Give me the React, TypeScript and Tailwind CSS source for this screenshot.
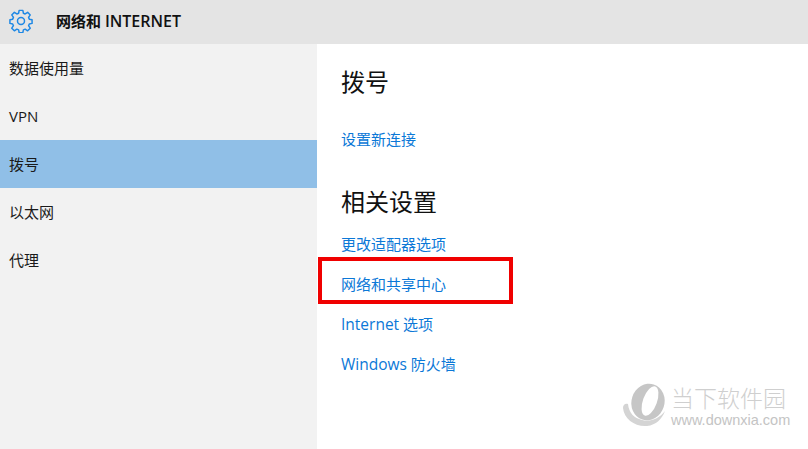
function Gear() {
  return (
    <svg width="24" height="24" viewBox="0 0 26 26" fill="none" stroke="#1e88e5" strokeWidth="1.6" className="shrink-0">
      <path d="M11 1.5h4l.6 3.1 1.9.8 2.7-1.8 2.8 2.8-1.8 2.7.8 1.9 3 .6v4l-3 .6-.8 1.9 1.8 2.7-2.8 2.8-2.7-1.8-1.9.8-.6 3h-4l-.6-3-1.9-.8-2.7 1.8-2.8-2.8 1.8-2.7-.8-1.9-3-.6v-4l3-.6.8-1.9-1.8-2.7 2.8-2.8 2.7 1.8 1.9-.8z" strokeLinejoin="round" />
      <circle cx="13" cy="13" r="3.8" />
    </svg>
  );
}
function Logo() {
  return (
    <svg width="44" height="44" viewBox="0 0 44 44" className="shrink-0">
      <ellipse cx="25" cy="19" rx="16.5" ry="18.5" transform="rotate(18 25 19)" fill="#c6c6c6" />
      <ellipse cx="27" cy="18" rx="7" ry="15.5" transform="rotate(20 27 18)" fill="#ffffff" />
      <path d="M0 25C1 36 12 44 24 43C33 42 39 36 42 28C36 36 27 39 19 37C11 35 6 30 5 21C2 20 0 22 0 25Z" fill="#d4d4d4" />
    </svg>
  );
}
const nav = ["数据使用量", "VPN", "拨号", "以太网", "代理"];
export default function App() {
  return (
    <div className="w-[808px] h-[449px] overflow-hidden relative bg-white flex flex-col font-['Open_Sans','Noto_Sans_CJK_SC',sans-serif] text-[15px]">
      <header className="h-[44px] shrink-0 bg-[#e4e4e4] flex items-center pl-[9px] pb-[3px] gap-[23px]">
        <Gear />
        <span className="text-[15px] font-semibold text-[#111]">网络和 <span className="text-[16px]">INTERNET</span></span>
      </header>
      <div className="flex flex-1 min-h-0">
        <nav className="w-[317px] shrink-0 bg-[#f2f2f2]">
          {nav.map((n, i) => (
            <div key={n} className={`h-[48px] flex items-center pl-[9px] text-[#1a1a1a] ${i === 2 ? "bg-[#90bfe7]" : ""}`}>{n}</div>
          ))}
        </nav>
        <main className="flex-1 pl-[24px] pt-[18px] flex flex-col items-start">
          <h1 className="text-[24px] leading-[40px] text-[#111]">拨号</h1>
          <a className="mt-[25px] leading-[24px] text-[#0b78d7]">设置新连接</a>
          <h2 className="mt-[31px] text-[24px] leading-[40px] text-[#111]">相关设置</h2>
          <div className="mt-[10px] flex flex-col gap-[16px]">
            <a className="leading-[24px] text-[#0b78d7]">更改适配器选项</a>
            <a className="leading-[24px] text-[#0b78d7]">网络和共享中心</a>
            <a className="leading-[24px] text-[#0b78d7]"><span className="text-[15.5px]">Internet</span> 选项</a>
            <a className="leading-[24px] text-[#0b78d7]"><span className="text-[15.5px]">Windows</span> 防火墙</a>
          </div>
        </main>
      </div>
      <div className="absolute left-[318px] top-[257px] w-[195px] h-[47px] border-[4px] border-[#f00000]" />
      <div className="absolute left-[623px] top-[383px] flex items-start gap-[4px]">
        <Logo />
        <div className="flex flex-col whitespace-nowrap w-[116px]">
          <span className="text-[23px] leading-[28px] text-[#cfcfcf] font-['Noto_Sans_CJK_SC',sans-serif] font-light">当下软件园</span>
          <span className="mt-[1px] text-[14.5px] leading-[16px] text-[#c4c4c4] font-['Liberation_Sans',sans-serif]">www.downxia.com</span>
        </div>
      </div>
    </div>
  );
}
